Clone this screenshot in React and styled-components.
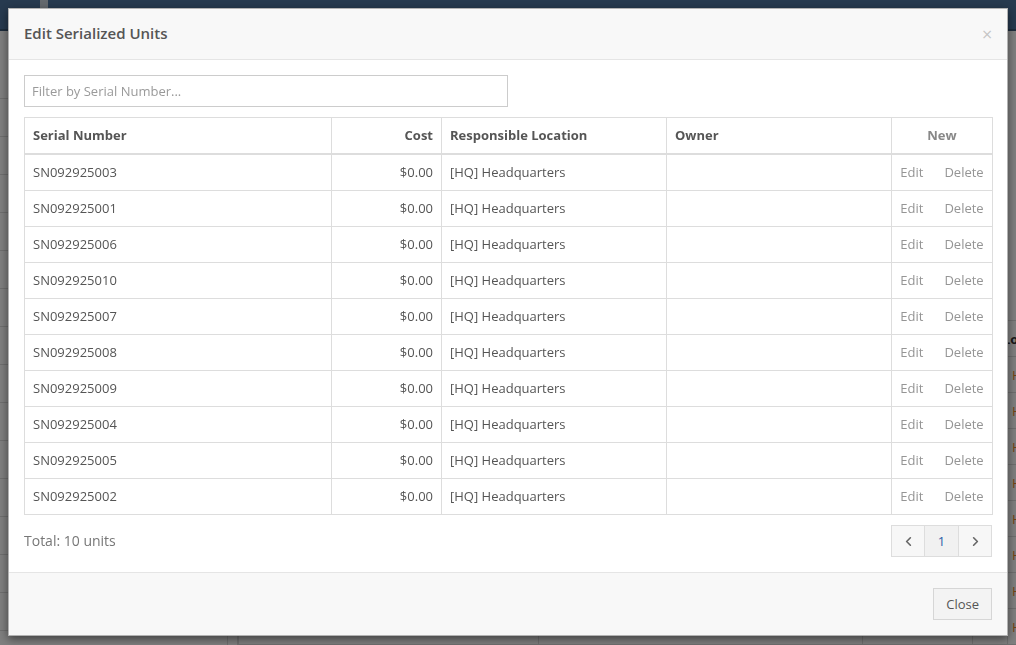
import React from "react";
import styled, { createGlobalStyle } from "styled-components";
import { ChevronLeft, ChevronRight } from "lucide-react";

const GlobalStyle = createGlobalStyle`
  html, body { margin: 0; padding: 0; overflow: hidden; }
  body { font-family: "Open Sans", "Liberation Sans", sans-serif; font-size: 13px; color: #555; }
  * { box-sizing: border-box; }
`;

/* ---------- background page ---------- */
const Page = styled.div`
  width: 1016px;
  height: 645px;
  background: #fff;
  display: flex;
  flex-direction: column;
`;
const NavBar = styled.div`
  height: 31px;
  flex: none;
  background: #4e749e;
  border-bottom: 2px solid #3a5878;
  position: relative;
`;
const NavIcon = styled.span`
  position: absolute;
  left: 40px;
  top: 0;
  width: 8px;
  height: 8px;
  background: #c9d3dd;
`;
const PageBody = styled.div`
  flex: 1;
  display: flex;
  min-height: 0;
`;
const Sidebar = styled.div`
  width: 228px;
  flex: none;
  border-right: 1px solid #dedede;
  padding-top: 30px;
`;
const SideItem = styled.div`
  height: 38px;
  border-bottom: 1px solid #dedede;
`;
const Main = styled.div`
  flex: 1;
  margin-left: 9px;
  border-left: 1px solid #dedede;
  padding-top: 289px;
  overflow: hidden;
`;
const BgTable = styled.table`
  border-collapse: collapse;
  table-layout: fixed;
  width: 900px;
`;
const BgTh = styled.th`
  height: 36px;
  text-align: left;
  padding: 0 4px;
  font-weight: 700;
  color: #333;
  border: 1px solid #dedede;
  white-space: nowrap;
  overflow: hidden;
  text-indent: ${(p) => p.$indent || "0"};
`;
const BgTd = styled.td`
  height: 36px;
  padding: 0 4px;
  color: ${(p) => (p.$link ? "#e8862a" : "#333")};
  border: 1px solid #dedede;
  white-space: nowrap;
  overflow: hidden;
`;
const Dim = styled.div`
  position: fixed;
  inset: 0;
  background: rgba(0, 0, 0, 0.5);
`;

/* ---------- modal ---------- */
const Modal = styled.div`
  position: fixed;
  top: 8px;
  left: 8px;
  width: 1000px;
  background: #fff;
  border: 1px solid rgba(0, 0, 0, 0.3);
  box-shadow: 0 3px 9px rgba(0, 0, 0, 0.5);
  display: flex;
  flex-direction: column;
`;
const Header = styled.div`
  background: #f8f8f8;
  border-bottom: 1px solid #e5e5e5;
  padding: 15px;
  display: flex;
  align-items: center;
  justify-content: space-between;
`;
const Title = styled.h4`
  margin: -1px 0 1px;
  font-size: 15px;
  line-height: 20px;
  font-weight: 600;
  color: #555;
`;
const CloseX = styled.button`
  border: 0;
  background: none;
  padding: 0;
  margin-right: -1px;
  font-family: "DejaVu Sans", sans-serif;
  font-size: 14px;
  line-height: 20px;
  color: #c4c4c4;
  cursor: pointer;
`;
const Body = styled.div`
  padding: 15px;
`;
const Filter = styled.input`
  display: block;
  width: 484px;
  height: 32px;
  border: 1px solid #ccc;
  border-radius: 0;
  padding: 6px 7px;
  font-family: inherit;
  font-size: 13px;
  color: #555;
  margin: 0 0 10px;
  &::placeholder { color: #9a9a9a; }
`;
const Table = styled.table`
  width: 100%;
  border-collapse: collapse;
  table-layout: fixed;
  border: 1px solid #ddd;
`;
const Th = styled.th`
  padding: 8px;
  line-height: 19px;
  font-size: 13px;
  font-weight: 700;
  color: ${(p) => (p.$muted ? "#888" : "#555")};
  text-align: ${(p) => p.$align || "left"};
  border: 1px solid #ddd;
  border-bottom: 2px solid #ddd;
`;
const Td = styled.td`
  padding: 8px;
  line-height: 19px;
  font-size: 13px;
  color: #555;
  text-align: ${(p) => p.$align || "left"};
  border: 1px solid #ddd;
  white-space: nowrap;
`;
const Actions = styled.div`
  display: flex;
  justify-content: center;
  gap: 21px;
`;
const ActionLink = styled.a`
  color: #959595;
  text-decoration: none;
  cursor: pointer;
`;
const FooterRow = styled.div`
  margin-top: 10px;
  display: flex;
  align-items: center;
  justify-content: space-between;
`;
const Total = styled.span`
  font-size: 14px;
  line-height: 19px;
  margin-top: -2px;
  color: #777;
`;
const Pager = styled.div`
  display: flex;
`;
const PageBtn = styled.button`
  width: ${(p) => (p.$num ? "35px" : "34px")};
  height: 32px;
  margin-left: -1px;
  border: 1px solid #ddd;
  background: ${(p) => (p.$num ? "#f1f1f1" : "#f7f7f7")};
  color: ${(p) => (p.$num ? "#2a5ea8" : "#666")};
  font-family: inherit;
  font-size: 13px;
  display: flex;
  align-items: center;
  justify-content: center;
  padding: 0;
  &:first-child { margin-left: 0; }
`;
const Footer = styled.div`
  background: #f8f8f8;
  border-top: 1px solid #e5e5e5;
  padding: 15px;
  display: flex;
  justify-content: flex-end;
`;
const Button = styled.button`
  height: 32px;
  padding: 0 12px;
  border: 1px solid #d6d6d6;
  background: #f3f3f3;
  color: #555;
  font-family: inherit;
  font-size: 13px;
  cursor: pointer;
`;

const serials = [
  "SN092925003",
  "SN092925001",
  "SN092925006",
  "SN092925010",
  "SN092925007",
  "SN092925008",
  "SN092925009",
  "SN092925004",
  "SN092925005",
  "SN092925002",
];

export default function App() {
  return (
    <>
      <GlobalStyle />
      <Page>
        <NavBar>
          <NavIcon />
        </NavBar>
        <PageBody>
          <Sidebar>
            {Array.from({ length: 16 }).map((_, i) => (
              <SideItem key={i} />
            ))}
          </Sidebar>
          <Main>
            <BgTable>
              <colgroup>
                <col style={{ width: 300 }} />
                <col style={{ width: 324 }} />
                <col style={{ width: 110 }} />
                <col style={{ width: 35 }} />
                <col style={{ width: 131 }} />
              </colgroup>
              <thead>
                <tr>
                  <BgTh>Item</BgTh>
                  <BgTh>Description</BgTh>
                  <BgTh>Qty</BgTh>
                  <BgTh></BgTh>
                  <BgTh $indent="-9px">Location</BgTh>
                </tr>
              </thead>
              <tbody>
                {Array.from({ length: 9 }).map((_, i) => (
                  <tr key={i}>
                    <BgTd>Item</BgTd>
                    <BgTd></BgTd>
                    <BgTd>1</BgTd>
                    <BgTd></BgTd>
                    <BgTd $link>HQ</BgTd>
                  </tr>
                ))}
              </tbody>
            </BgTable>
          </Main>
        </PageBody>
      </Page>
      <Dim />
      <Modal>
        <Header>
          <Title>Edit Serialized Units</Title>
          <CloseX aria-label="Close">×</CloseX>
        </Header>
        <Body>
          <Filter placeholder="Filter by Serial Number..." />
          <Table>
            <colgroup>
              <col style={{ width: 307 }} />
              <col style={{ width: 110 }} />
              <col style={{ width: 225 }} />
              <col style={{ width: 225 }} />
              <col style={{ width: 101 }} />
            </colgroup>
            <thead>
              <tr>
                <Th>Serial Number</Th>
                <Th $align="right">Cost</Th>
                <Th>Responsible Location</Th>
                <Th>Owner</Th>
                <Th $align="center" $muted>
                  New
                </Th>
              </tr>
            </thead>
            <tbody>
              {serials.map((s) => (
                <tr key={s}>
                  <Td>{s}</Td>
                  <Td $align="right">$0.00</Td>
                  <Td>[HQ] Headquarters</Td>
                  <Td></Td>
                  <Td>
                    <Actions>
                      <ActionLink>Edit</ActionLink>
                      <ActionLink>Delete</ActionLink>
                    </Actions>
                  </Td>
                </tr>
              ))}
            </tbody>
          </Table>
          <FooterRow>
            <Total>Total: 10 units</Total>
            <Pager>
              <PageBtn aria-label="Previous">
                <ChevronLeft size={15} strokeWidth={2.6} />
              </PageBtn>
              <PageBtn $num>1</PageBtn>
              <PageBtn aria-label="Next">
                <ChevronRight size={15} strokeWidth={2.6} />
              </PageBtn>
            </Pager>
          </FooterRow>
        </Body>
        <Footer>
          <Button>Close</Button>
        </Footer>
      </Modal>
    </>
  );
}
